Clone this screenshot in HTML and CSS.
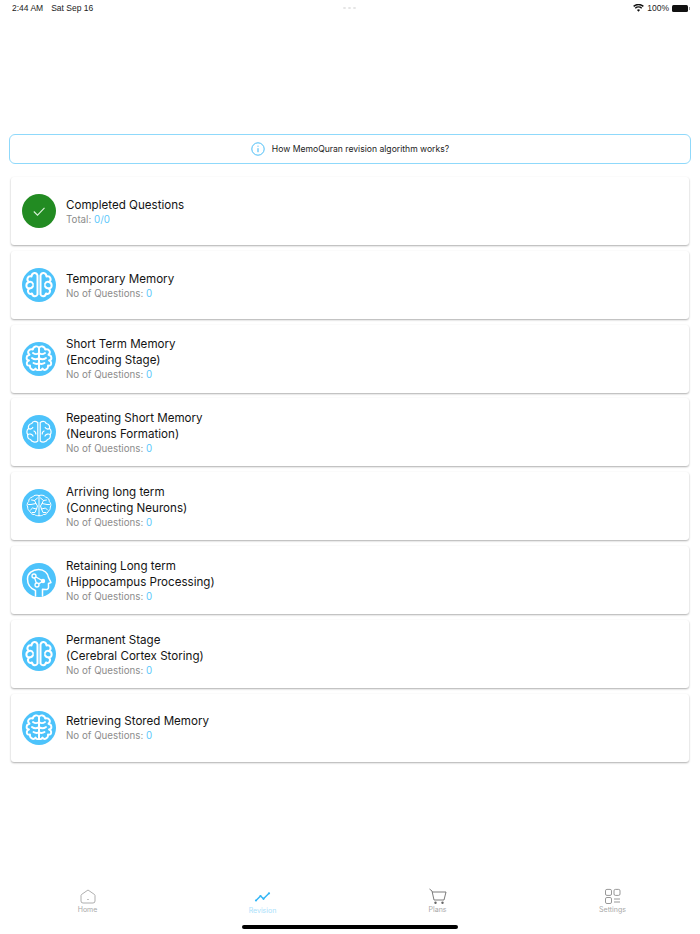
FILE: index.html
```html
<!DOCTYPE html>
<html lang="en">
<head>
<meta charset="utf-8">
<title>Revision</title>
<link rel="stylesheet" href="styles.css">
</head>
<body>
<svg class="defs" width="0" height="0" aria-hidden="true">
  <symbol id="b-lobes" viewBox="0 0 34 34">
    <circle cx="17" cy="17" r="17" fill="#4dc3fb"/>
    <g id="lobe-half" fill="none" stroke="#fff" stroke-width="2" stroke-linecap="round" stroke-linejoin="round">
      <path d="M15.500 7.500C14.500 4 10 4 9.500 8.500 5.500 7.500 4 12 7 14 3.500 15 3.500 20 7 20.500 4.500 23.500 7 27 10 25.500 10.500 29 14.500 29 15.500 26.500Z"/>
      <path d="M7 14C9 13.500 10.500 14.500 11 16M7 20.500C9 20.500 10.500 19.500 11 18"/>
    </g>
    <use href="#lobe-half" transform="matrix(-1 0 0 1 34 0)"/>
  </symbol>
  <symbol id="b-ribs" viewBox="0 0 34 34">
    <circle cx="17" cy="17" r="17" fill="#4dc3fb"/>
    <g id="rib-half" fill="none" stroke="#fff" stroke-width="1.900" stroke-linecap="round" stroke-linejoin="round">
      <path d="M17 6C15.500 3.500 11.500 4 10.800 7.500 7 6.500 4.500 10 7.500 12.800 4 13.500 3.500 18 7 18.500 3.500 20 4.500 24.500 8 23.500 7.500 27 11.500 29.500 13.500 26.500 14.500 28.500 16 28.500 17 27.500"/>
      <path d="M17 6V27.500M17 11C15 12.500 13 12.500 11 11M17 16C15 17.500 12 17.500 10 16M17 21.500C15.500 22 13 22 11.500 21"/>
    </g>
    <use href="#rib-half" transform="matrix(-1 0 0 1 34 0)"/>
  </symbol>
  <symbol id="b-halves" viewBox="0 0 34 34">
    <circle cx="17" cy="17" r="17" fill="#4dc3fb"/>
    <g id="half-half" fill="none" stroke="#fff" stroke-width="1.200" stroke-linecap="round" stroke-linejoin="round">
      <path d="M15.800 7.500C13 5.500 10.500 6.500 9.800 8.500 7.500 9 6 11 6.500 13.500 4.500 15 4.500 18 5.800 19.500 5.200 22 6.500 24 8.500 24.500 9.500 27 13.500 28 15.800 26Z"/>
      <path d="M6.500 13.500C8 14.500 10 14 10.800 12.500M5.800 19.500C7.500 18.500 10 19 11 21M12 16C13 16.500 14 17.500 13.800 19"/>
    </g>
    <use href="#half-half" transform="matrix(-1 0 0 1 34 0)"/>
  </symbol>
  <symbol id="b-net" viewBox="0 0 34 34">
    <circle cx="17" cy="17" r="17" fill="#4dc3fb"/>
    <g fill="none" stroke="#fff" stroke-width="1" stroke-linecap="round" stroke-linejoin="round">
      <path d="M17 6.500c-3-1-5.500 0-6.500 1.500-2.500.5-4 2.500-3.800 4.500-1.700 1.500-2 4-1 5.500-.2 2 .8 3.700 2.300 4.500.5 2 2.500 3.300 4.500 3 1.300 1.200 3 1.500 4.500 1 1.500.5 3.200.2 4.500-1 2 .3 4-1 4.500-3 1.500-.8 2.500-2.500 2.300-4.500 1-1.500.7-4-1-5.500.2-2-1.300-4-3.800-4.500-1-1.500-3.500-2.500-6.500-1.500z"/>
      <path d="M17 6.500v20.500M15.500 9l-3 2.500-3-.5M12.500 11.500l1.500 3-5 1-2.500 0M14 14.500l1.500 2.500-1 3-4-1-2 2M14.500 20l-1.500 3.500-3 0M18.500 9l3 2.500 3-.5M21.500 11.500l-1.500 3 5 1 2.500 0M20 14.500l-1.500 2.500 1 3 4-1 2 2M19.500 20l1.500 3.500 3 0"/>
    </g>
  </symbol>
  <symbol id="b-head" viewBox="0 0 34 34">
    <circle cx="17" cy="17" r="17" fill="#4dc3fb"/>
    <path d="M13.500 33V27.500C8.500 25.500 5.500 21 5.500 16 5.500 10.500 10.500 6.500 16.500 6.500 22.500 6.500 26 10.500 26.500 14.500L29 19.500 26.500 20.500V24.500C26.500 26 25 26.800 23.500 26.500L20.500 26.200V33" fill="none" stroke="#fff" stroke-width="1.500" stroke-linecap="round" stroke-linejoin="round"/>
    <path d="M12 13 15 22 21 18Z" fill="none" stroke="#fff" stroke-width="1.300"/>
    <circle cx="12" cy="13" r="2" fill="#4dc3fb" stroke="#fff" stroke-width="1.300"/>
    <circle cx="15" cy="22" r="2" fill="#4dc3fb" stroke="#fff" stroke-width="1.300"/>
    <circle cx="21" cy="18" r="2.200" fill="#fff"/>
  </symbol>
</svg>

<div class="app">
  <header class="status">
    <div class="status-left"><span>2:44 AM</span><span>Sat Sep 16</span></div>
    <div class="status-dots"><i></i><i></i><i></i></div>
    <div class="status-right">
      <svg class="wifi" viewBox="0 0 16 12" aria-hidden="true"><path d="M8 11.500 5.700 8.900a3.400 3.400 0 0 1 4.600 0zM3.900 7.200 2.400 5.500a8.300 8.300 0 0 1 11.200 0l-1.500 1.700a6 6 0 0 0-8.200 0zM1.400 4.400 0 2.800a11.800 11.800 0 0 1 16 0l-1.400 1.600a9.700 9.700 0 0 0-13.200 0z" fill="#111"/></svg>
      <span>100%</span>
      <span class="battery"></span>
    </div>
  </header>

  <main class="content">
    <div class="notice">
      <svg class="info" viewBox="0 0 14 14" aria-hidden="true"><circle cx="7" cy="7" r="6.200" fill="none" stroke="#35b6f5" stroke-width=".9"/><path d="M7 6.200v4M7 3.700v1" stroke="#35b6f5" stroke-width="1" fill="none"/></svg>
      <span>How MemoQuran revision algorithm works?</span>
    </div>

    <div class="cards">
      <section class="card">
        <svg class="badge" viewBox="0 0 34 34" aria-hidden="true"><circle cx="17" cy="17" r="17" fill="#228b22"/><path d="M11.800 17.500l3.700 3.700 7-7.400" fill="none" stroke="#d9f0d9" stroke-width="1.100"/></svg>
        <div class="card-text"><h2>Completed Questions</h2><p>Total: <b>0/0</b></p></div>
      </section>
      <section class="card">
        <svg class="badge" aria-hidden="true"><use href="#b-lobes"/></svg>
        <div class="card-text"><h2>Temporary Memory</h2><p>No of Questions: <b>0</b></p></div>
      </section>
      <section class="card">
        <svg class="badge" aria-hidden="true"><use href="#b-ribs"/></svg>
        <div class="card-text"><h2>Short Term Memory<br>(Encoding Stage)</h2><p>No of Questions: <b>0</b></p></div>
      </section>
      <section class="card">
        <svg class="badge" aria-hidden="true"><use href="#b-halves"/></svg>
        <div class="card-text"><h2>Repeating Short Memory<br>(Neurons Formation)</h2><p>No of Questions: <b>0</b></p></div>
      </section>
      <section class="card">
        <svg class="badge" aria-hidden="true"><use href="#b-net"/></svg>
        <div class="card-text"><h2>Arriving long term<br>(Connecting Neurons)</h2><p>No of Questions: <b>0</b></p></div>
      </section>
      <section class="card">
        <svg class="badge" aria-hidden="true"><use href="#b-head"/></svg>
        <div class="card-text"><h2>Retaining Long term<br>(Hippocampus Processing)</h2><p>No of Questions: <b>0</b></p></div>
      </section>
      <section class="card">
        <svg class="badge" aria-hidden="true"><use href="#b-lobes"/></svg>
        <div class="card-text"><h2>Permanent Stage<br>(Cerebral Cortex Storing)</h2><p>No of Questions: <b>0</b></p></div>
      </section>
      <section class="card">
        <svg class="badge" aria-hidden="true"><use href="#b-ribs"/></svg>
        <div class="card-text"><h2>Retrieving Stored Memory</h2><p>No of Questions: <b>0</b></p></div>
      </section>
    </div>
  </main>

  <nav class="tabs">
    <div class="tab">
      <svg class="tab-icon" viewBox="0 0 18 16" aria-hidden="true"><path d="M9 2 15.500 6.500Q16 7 16 7.500V13Q16 15 14 15H4Q2 15 2 13V7.500Q2 7 2.500 6.500Z" fill="none" stroke="#999" stroke-width=".8"/><circle cx="9" cy="11.500" r=".6" fill="#777"/></svg>
      <span>Home</span>
    </div>
    <div class="tab tab-active">
      <svg class="tab-icon" viewBox="0 0 18 16" aria-hidden="true"><path d="M2 11.500 6.500 7l3 2.800 5.500-5.500" fill="none" stroke="#35b6f5" stroke-width="1.500"/><g fill="#35b6f5"><circle cx="2" cy="11.500" r="1.100"/><circle cx="6.500" cy="7" r="1.100"/><circle cx="9.500" cy="9.800" r="1.100"/><circle cx="15" cy="4.300" r="1.100"/></g></svg>
      <span>Revision</span>
    </div>
    <div class="tab">
      <svg class="tab-icon" viewBox="0 0 18 16" aria-hidden="true"><path d="M.5 1 3 3 5 12H15L17 4H3.200" fill="none" stroke="#6d6d6d" stroke-width=".9"/><circle cx="6.500" cy="14.700" r="1.200" fill="#666"/><circle cx="13.500" cy="14.700" r="1.200" fill="#666"/></svg>
      <span>Plans</span>
    </div>
    <div class="tab">
      <svg class="tab-icon" viewBox="0 0 18 16" aria-hidden="true"><g fill="none" stroke="#7d7d7d" stroke-width=".8"><rect x="1.500" y="1.400" width="6" height="6" rx="1.400"/><rect x="10" y="1.400" width="6" height="6" rx="1.400"/><rect x="1.500" y="9.500" width="6" height="6" rx="1.400"/><path d="M10 11h6M10 14h6"/></g></svg>
      <span>Settings</span>
    </div>
    <div class="home-bar"></div>
  </nav>
</div>
</body>
</html>
```
FILE: styles.css
```css
* { box-sizing: border-box; }
html, body { margin: 0; padding: 0; background: #fff; }
body { font-family: "Inter", "Open Sans", sans-serif; color: #111; }
.defs { position: absolute; }
.app { width: 700px; height: 934px; display: flex; flex-direction: column; overflow: hidden; }

.status { height: 16px; padding: 0 11px 0 12px; display: flex; justify-content: space-between; align-items: center; position: relative; font-family: "Liberation Sans", sans-serif; font-size: 8.500px; color: #222; }
.status-left { display: flex; gap: 8px; }
.status-dots { position: absolute; left: 343px; top: 7px; display: flex; gap: 2px; }
.status-dots i { width: 3px; height: 2px; border-radius: 50%; background: #e4e4e4; }
.status-right { display: flex; align-items: center; gap: 3px; }
.wifi { width: 11px; height: 8px; }
.battery { width: 16px; height: 7px; background: #111; border-radius: 1.500px; position: relative; margin-right: 1px; }
.battery::after { content: ""; position: absolute; right: -1.500px; top: 2px; width: 1px; height: 3px; background: #999; }

.content { flex: 1; padding: 118px 9px 0; }
.notice { height: 30px; border: 1px solid #8fd9fb; border-radius: 6px; display: flex; align-items: center; justify-content: center; gap: 7px; font-size: 8.600px; color: #222; }
.info { width: 14px; height: 14px; }

.cards { margin: 13px 2px 0; display: flex; flex-direction: column; gap: 5.800px; }
.card { height: 68px; background: #fff; border-radius: 3px; box-shadow: 0 1px 2px rgba(0,0,0,.32); display: flex; align-items: center; gap: 10px; padding: 0 11px; }
.badge { width: 34px; height: 34px; flex: none; }
.card-text { padding-top: 1.500px; }
.card-text h2 { margin: 0; font-size: 11.600px; line-height: 16px; font-weight: 400; color: #141414; }
.card-text p { margin: 0; font-size: 9.750px; line-height: 14px; color: #8c8c8c; }
.card-text b { font-weight: 400; color: #5cc8fb; }

.tabs { height: 60px; flex: none; position: relative; display: grid; grid-template-columns: repeat(4, 175px); padding-top: 14px; }
.tab { display: flex; flex-direction: column; align-items: center; font-size: 7px; color: #a8a8a8; }
.tab-icon { width: 18px; height: 16px; margin-bottom: 1px; }
.tab-active { color: #a9e1fb; padding-top: 1px; }
.home-bar { position: absolute; left: 242px; bottom: 5px; width: 216px; height: 4px; border-radius: 2px; background: #000; }
```
